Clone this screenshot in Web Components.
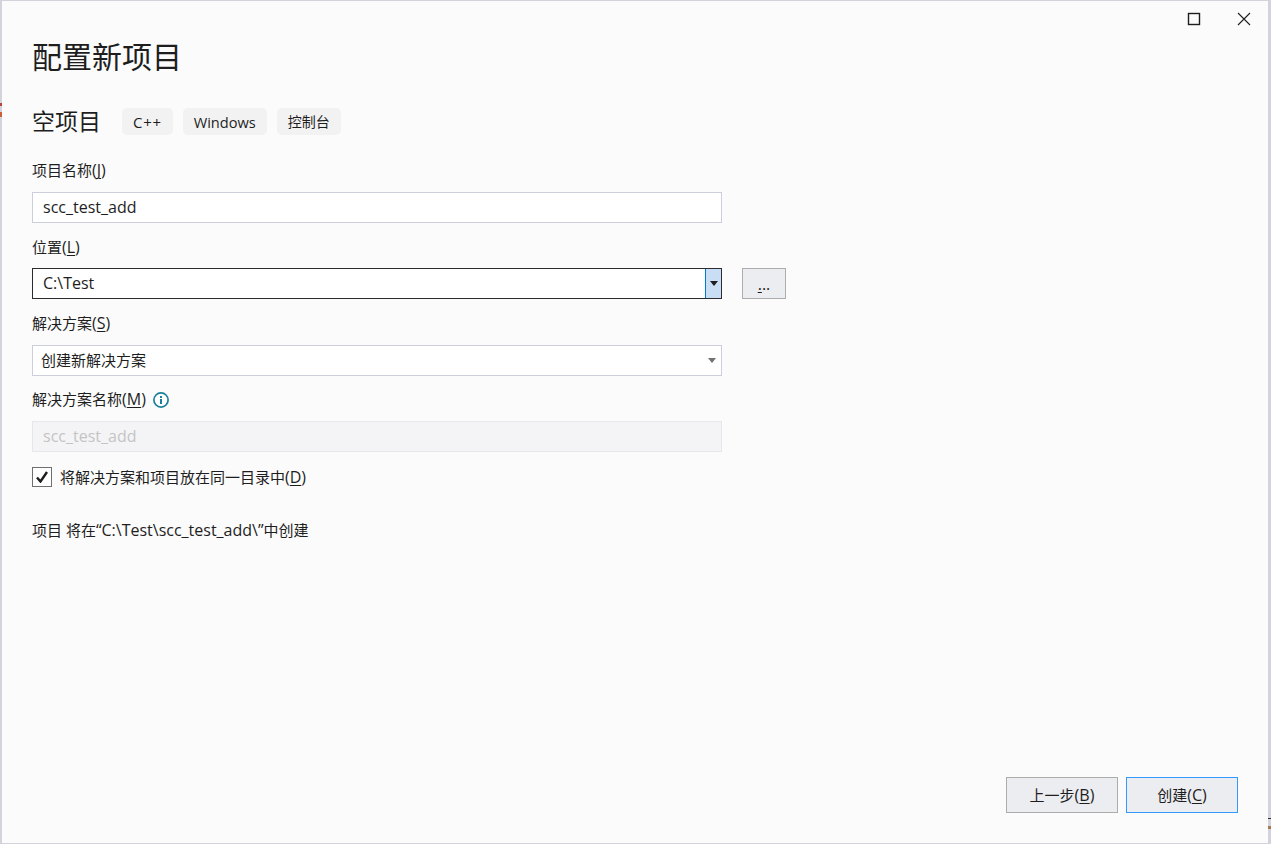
<!DOCTYPE html>
<html lang="zh">
<head>
<meta charset="utf-8">
<title>配置新项目</title>
<style>
    html, body { margin: 0; height: 100%; background: #d3d3dd; overflow: hidden; }
    body { font: 15px/20px "Open Sans", "Noto Sans CJK SC", sans-serif; color: #1e1e1e; }
    u { text-underline-offset: 2px; }
    .l { font-size: 16px; }
    .note { margin-top: 32px; }
    /* bits of the window behind that show through the edge */
    .peek { position: absolute; }
</style>
</head>
<body>

<vs-dialog>
    <h-line slot="title">配置新项目</h-line>
    <vs-tag slot="tags" style="font-size:15px;letter-spacing:.7px">C++</vs-tag>
    <vs-tag slot="tags" style="font-size:14.6px">Windows</vs-tag>
    <vs-tag slot="tags">控制台</vs-tag>

    <vs-field>
        <span slot="label">项目名称<span class="l">(<u>J</u>)</span></span>
        <vs-input value="scc_test_add"></vs-input>
    </vs-field>
    <vs-field>
        <span slot="label">位置<span class="l">(<u>L</u>)</span></span>
        <vs-input value="C:\Test" kind="focus"></vs-input>
        <vs-button slot="after" kind="browse"><span class="l"><u>.</u>..</span></vs-button>
    </vs-field>
    <vs-field>
        <span slot="label">解决方案<span class="l">(<u>S</u>)</span></span>
        <vs-input value="创建新解决方案" kind="select"></vs-input>
    </vs-field>
    <vs-field>
        <span slot="label">解决方案名称<span class="l">(<u>M</u>)</span></span>
        <vs-info slot="label"></vs-info>
        <vs-input value="scc_test_add" kind="disabled"></vs-input>
    </vs-field>
    <vs-check>将解决方案和项目放在同一目录中<span class="l">(<u>D</u>)</span></vs-check>
    <div class="note">项目 将在<span class="l">“C:\Test\scc_test_add\”</span>中创建</div>

    <vs-button slot="footer">上一步<span class="l">(<u>B</u>)</span></vs-button>
    <vs-button slot="footer" kind="default">创建<span class="l">(<u>C</u>)</span></vs-button>
</vs-dialog>

<i class="peek" style="left:0;top:103px;width:2px;height:3px;background:#b8433c"></i>
<i class="peek" style="left:0;top:112px;width:2px;height:5px;background:#c9603a"></i>
<i class="peek" style="left:1268px;top:818px;width:3px;height:1px;background:#333"></i>
<i class="peek" style="left:1268px;top:826px;width:3px;height:3px;background:#a8794a"></i>

<script>
    // every element gets its own shadow root, markup and styles kept together
    function shadow(el, html) {
        el.attachShadow({mode: 'open'}).innerHTML = html;
    }

    customElements.define('h-line', class extends HTMLElement {
        constructor() {
            super();
            shadow(this, `<style>:host { display: block; font-size: 30px; line-height: 40px; color: #1e1e1e; }</style><slot></slot>`);
        }
    });

    customElements.define('vs-dialog', class extends HTMLElement {
        constructor() {
            super();
            shadow(this, `
                <style>
                    :host {
                        display: flex; flex-direction: column; box-sizing: border-box;
                        width: 1266px; height: 842px; margin-top: 1px; margin-left: 2px;
                        background: #fbfbfb;
                        padding: 0 30px 30px 30px;
                    }
                    .caption { display: flex; justify-content: flex-end; height: 36px; margin-right: -31px; }
                    .caption span { width: 50px; height: 36px; display: flex; align-items: center; justify-content: center; }
                    .sub { display: flex; align-items: center; height: 40px; margin-top: 24px; }
                    .sub b { font-weight: 400; font-size: 23px; line-height: 28px; width: 90px; }
                    .tags { display: flex; gap: 10px; }
                    .form { flex: 1; margin-top: 19.33px; }
                    .foot { display: flex; justify-content: flex-end; gap: 8px; }
                </style>
                <div class="caption">
                    <span><svg width="14" height="14" viewBox="0 0 14 14"><rect x="1.5" y="1.5" width="11" height="11" fill="none" stroke="#1e1e1e" stroke-width="1.4"/></svg></span>
                    <span><svg width="16" height="16" viewBox="0 0 16 16"><path d="M2 2 14 14M14 2 2 14" fill="none" stroke="#1e1e1e" stroke-width="1.1"/></svg></span>
                </div>
                <div><slot name="title"></slot></div>
                <div class="sub"><b>空项目</b><div class="tags"><slot name="tags"></slot></div></div>
                <div class="form"><slot></slot></div>
                <div class="foot"><slot name="footer"></slot></div>`);
        }
    });

    customElements.define('vs-tag', class extends HTMLElement {
        constructor() {
            super();
            shadow(this, `
                <style>
                    :host {
                        display: block; height: 27px; padding: 0 11px;
                        background: #f2f2f2; border-radius: 5px;
                        font-size: 14px; line-height: 28px; color: #1e1e1e;
                    }
                </style><slot></slot>`);
        }
    });

    customElements.define('vs-field', class extends HTMLElement {
        constructor() {
            super();
            shadow(this, `
                <style>
                    :host { display: block; height: 76.33px; }
                    .label { display: flex; align-items: center; height: 20px; margin-bottom: 11.67px; gap: 7px; }
                    .row { display: flex; gap: 20px; }
                </style>
                <div class="label"><slot name="label"></slot></div>
                <div class="row"><slot></slot><slot name="after"></slot></div>`);
        }
    });

    customElements.define('vs-input', class extends HTMLElement {
        constructor() {
            super();
            let kind = this.getAttribute('kind') || '';
            let arrow = kind == 'focus' || kind == 'select'
                ? `<i class="arrow"><svg width="8" height="5" viewBox="0 0 8 5"><path d="M0 0h8L4 5z"/></svg></i>` : '';
            shadow(this, `
                <style>
                    :host {
                        display: flex; box-sizing: border-box; width: 690px; height: 31px;
                        background: #fff; border: 1px solid #cccedb;
                        align-items: center; line-height: 29px; color: #1e1e1e; font-size: 16px;
                    }
                    span { flex: 1; padding-left: 10px; }
                    .arrow { width: 16px; height: 29px; display: flex; align-items: center; justify-content: center; fill: #717171; }
                    :host([kind=focus]) { border-color: #2c2c30; }
                    :host([kind=focus]) .arrow { background: #c9def5; border-left: 1px solid #007acc; fill: #1e1e1e; box-sizing: border-box; width: 16px; }
                    :host([kind=select]) { font-size: 15px; }
                    :host([kind=select]) span { padding-left: 8px; }
                    :host([kind=select]) .arrow { margin-right: 1px; }
                    :host([kind=disabled]) { background: #f4f4f6; border-color: #e6e7ed; color: #c4c4c4; }
                </style>
                <span>${this.getAttribute('value')}</span>${arrow}`);
        }
    });

    customElements.define('vs-button', class extends HTMLElement {
        constructor() {
            super();
            shadow(this, `
                <style>
                    :host {
                        display: flex; box-sizing: border-box; width: 112px; height: 36px;
                        align-items: center; justify-content: center;
                        background: #ecedf1; border: 1px solid #acacac;
                        font-size: 15px; color: #1e1e1e;
                    }
                    :host([kind=default]) { border-color: #3399ff; }
                    :host([kind=browse]) { width: 44px; height: 31px; }
                </style><slot></slot>`);
        }
    });

    customElements.define('vs-info', class extends HTMLElement {
        constructor() {
            super();
            shadow(this, `
                <style>:host { display: block; width: 16px; height: 16px; margin-top: 1px; }</style>
                <svg width="16" height="16" viewBox="0 0 16 16">
                    <circle cx="8" cy="8" r="7.1" fill="#fff" stroke="#1a7f9c" stroke-width="1.7"/>
                    <rect x="7" y="7" width="2" height="5" fill="#1a7f9c"/>
                    <rect x="7" y="4" width="2" height="2" fill="#1a7f9c"/>
                </svg>`);
        }
    });

    customElements.define('vs-check', class extends HTMLElement {
        constructor() {
            super();
            shadow(this, `
                <style>
                    :host { display: flex; align-items: center; gap: 8px; height: 21px; margin-top: 1px; }
                    .box { box-sizing: border-box; width: 20px; height: 20px; background: #fff; border: 1px solid #6f6f6f; display: flex; align-items: center; justify-content: center; }
                </style>
                <div class="box"><svg width="12" height="12" viewBox="0 0 12 12"><path d="M1 6.5 4.5 10.5 11 1" fill="none" stroke="#1e1e1e" stroke-width="2.4"/></svg></div>
                <span><slot></slot></span>`);
        }
    });
</script>
</body>
</html>
